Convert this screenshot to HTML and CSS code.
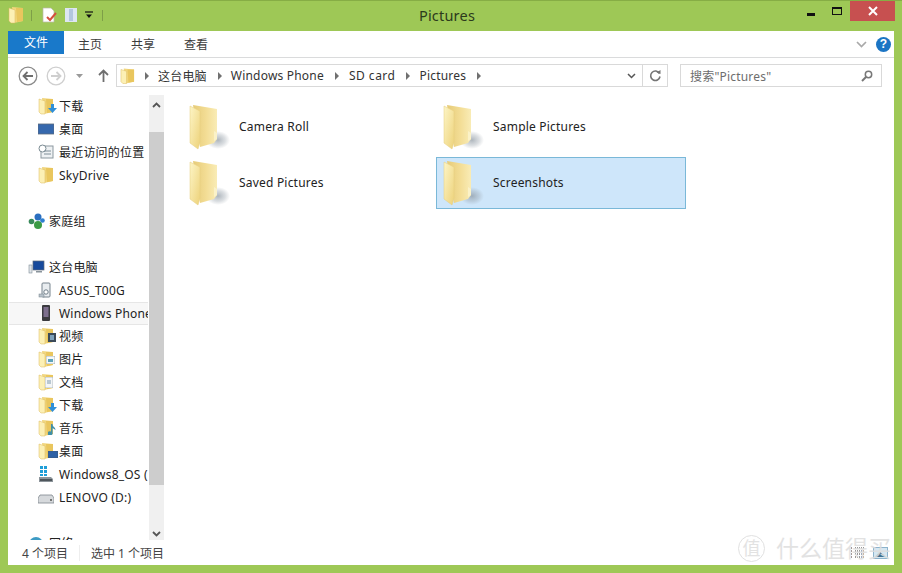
FILE: index.html
```html
<!DOCTYPE html>
<html lang="zh">
<head>
<meta charset="utf-8">
<title>Pictures</title>
<link rel="stylesheet" href="styles.css">
</head>
<body>
<svg class="defs" width="0" height="0">
  <defs>
    <linearGradient id="fb" x1="0" x2="1" y1="0" y2="0"><stop offset="0" stop-color="#e6cb78"/><stop offset=".55" stop-color="#f3dd95"/><stop offset="1" stop-color="#f9ecb6"/></linearGradient>
    <linearGradient id="ff" x1="0" x2="1" y1="0" y2="1"><stop offset="0" stop-color="#fdf5c6"/><stop offset="1" stop-color="#edd27a"/></linearGradient>
    <radialGradient id="sh"><stop offset="0" stop-color="#8b96a0" stop-opacity=".7"/><stop offset=".6" stop-color="#98a2ab" stop-opacity=".35"/><stop offset="1" stop-color="#a0a8b0" stop-opacity="0"/></radialGradient>
    <symbol id="folder-big" viewBox="0 0 44 48">
      <ellipse cx="30" cy="36" rx="12" ry="9" fill="url(#sh)"/>
      <path d="M5 1 L29 5 V35 L26 39 L12 43 Z" fill="url(#fb)"/>
      <path d="M26 27 L29 29 V35 L26 37 Z" fill="#fbf2c8"/>
      <path d="M2 2 L12 7 L12 38 L10 45 L2 39 Z" fill="url(#ff)" stroke="#e6cd7c" stroke-width=".5"/>
    </symbol>
    <symbol id="folder-small" viewBox="0 0 16 18">
      <path d="M4 1 L15 2 V15 L6 17 Z" fill="#f1d67e"/>
      <path d="M8 2 L15 2 V15 L9 16 Z" fill="#e9c65e"/>
      <path d="M1 2 L7 4 L7 17 L3 17 L1 15 Z" fill="#fcf0b5" stroke="#dcbb5c" stroke-width=".5"/>
    </symbol>
  </defs>
</svg>
<div class="window">
  <header class="titlebar">
    <div class="qat">
      <svg class="qat-folder" width="16" height="18"><use href="#folder-small"/></svg>
      <span class="qat-sep"></span>
      <svg width="16" height="16" viewBox="0 0 16 16"><path d="M2 1h8l3 3v11H2z" fill="#fff" stroke="#b9b9a8" stroke-width=".7"/><path d="M6 10l3 3 6-7" fill="none" stroke="#d4503e" stroke-width="2"/></svg>
      <svg class="qat-props" width="14" height="16" viewBox="0 0 14 16"><rect x="1" y="1" width="12" height="14" fill="#dde6f2"/><rect x="5" y="2" width="4" height="12" fill="#b3c6de"/></svg>
      <svg class="qat-drop" width="8" height="8" viewBox="0 0 8 8"><path d="M0 1h8" stroke="#111" stroke-width="1.2"/><path d="M1 3.500h6L4 7z" fill="#111"/></svg>
      <span class="qat-sep last"></span>
    </div>
    <div class="title">Pictures</div>
    <div class="controls">
      <button class="ctl"><span class="min-glyph"></span></button>
      <button class="ctl"><span class="max-glyph"></span></button>
      <button class="ctl close"><svg width="10" height="10" viewBox="0 0 10 10"><path d="M1 1l8 8M9 1l-8 8" stroke="#fff" stroke-width="2"/></svg></button>
    </div>
  </header>

  <div class="pane">
    <nav class="ribbon">
      <div class="tab file">文件</div>
      <div class="tab">主页</div>
      <div class="tab">共享</div>
      <div class="tab">查看</div>
      <div class="ribbon-end">
        <svg width="11" height="7" viewBox="0 0 11 7"><path d="M1 1l4.500 4.500L10 1" fill="none" stroke="#a9a9a9" stroke-width="1.700"/></svg>
        <span class="help">?</span>
      </div>
    </nav>

    <div class="addressrow">
      <svg class="nav-btn" width="20" height="20" viewBox="0 0 20 20"><circle cx="10" cy="10" r="8.800" fill="#fff" stroke="#8b8b8b" stroke-width="1.300"/><path d="M15 10H6M9.500 6L5.500 10l4 4" fill="none" stroke="#6e6e6e" stroke-width="1.800"/></svg>
      <svg class="nav-btn fwd" width="20" height="20" viewBox="0 0 20 20"><circle cx="10" cy="10" r="8.800" fill="#fff" stroke="#cfcfcf" stroke-width="1.300"/><path d="M5 10h9M10.500 6l4 4-4 4" fill="none" stroke="#cfcfcf" stroke-width="1.800"/></svg>
      <svg class="recent" width="7" height="4" viewBox="0 0 7 4"><path d="M0 0h7L3.500 4z" fill="#9a9a9a"/></svg>
      <svg class="up" width="11" height="13" viewBox="0 0 11 13"><path d="M5.500 13V2M1 6l4.500-4.500L10 6" fill="none" stroke="#6f6f6f" stroke-width="1.800"/></svg>
      <div class="address">
        <svg class="addr-folder" width="15" height="18"><use href="#folder-small"/></svg>
        <span class="crumb-arrow"></span><span class="crumb">这台电脑</span>
        <span class="crumb-arrow"></span><span class="crumb">Windows Phone</span>
        <span class="crumb-arrow"></span><span class="crumb wide">SD card</span>
        <span class="crumb-arrow"></span><span class="crumb">Pictures</span>
        <span class="crumb-arrow"></span>
        <span class="addr-spacer"></span>
        <svg class="addr-drop" width="9" height="6" viewBox="0 0 9 6"><path d="M1 1l3.500 3.500L8 1" fill="none" stroke="#555" stroke-width="1.500"/></svg>
        <span class="refresh">
          <svg width="13" height="13" viewBox="0 0 13 13"><path d="M10.500 4.500A4.700 4.700 0 1 0 11 7.500" fill="none" stroke="#757575" stroke-width="1.600"/><path d="M7.500 3.500L11.500 5V1z" fill="#757575"/></svg>
        </span>
      </div>
      <div class="search">
        <span>搜索"Pictures"</span>
        <svg width="12" height="12" viewBox="0 0 12 12"><circle cx="7.500" cy="4.500" r="3.200" fill="none" stroke="#777" stroke-width="1.500"/><path d="M5 7l-4 4" stroke="#777" stroke-width="2"/></svg>
      </div>
    </div>

    <div class="main">
      <aside class="sidebar">
        <div class="tree">
          <div class="row l2"><svg class="ni" width="16" height="18"><use href="#folder-small"/></svg><svg class="badge" width="9" height="9" viewBox="0 0 9 9"><path d="M3 0h3v4h3L4.500 9 0 4h3z" fill="#2f8fd8"/></svg><span>下载</span></div>
          <div class="row l2"><svg class="ni" width="16" height="18" viewBox="0 0 16 18"><rect y="4" width="16" height="10" fill="#3668ad" stroke="#5d6b7d" stroke-width=".8"/></svg><span>桌面</span></div>
          <div class="row l2"><svg class="ni" width="16" height="18" viewBox="0 0 16 18"><rect x="3" y="3" width="12" height="12" fill="#eef1f3" stroke="#8b979f"/><circle cx="4.500" cy="5.500" r="3.500" fill="#fff" stroke="#7b8b93"/><path d="M6 8h7M6 11h7" stroke="#7f8e98"/></svg><span>最近访问的位置</span></div>
          <div class="row l2 lat"><svg class="ni" width="16" height="18"><use href="#folder-small"/></svg><span>SkyDrive</span></div>
          <div class="gap"></div>
          <div class="row l1"><svg class="ni" width="17" height="18" viewBox="0 0 17 18"><circle cx="10" cy="5" r="3.500" fill="#2b6fc0"/><circle cx="3.500" cy="9.500" r="2.800" fill="#3a8a5b"/><circle cx="10" cy="13" r="4" fill="#3c9b45"/><circle cx="14.500" cy="8.500" r="2.300" fill="#2f7fd0"/></svg><span>家庭组</span></div>
          <div class="gap"></div>
          <div class="row l1"><svg class="ni" width="17" height="18" viewBox="0 0 17 18"><rect x="1" y="7" width="3" height="8" fill="#dfe4e8" stroke="#7f8c96" stroke-width=".6"/><rect x="5" y="3" width="11" height="9" fill="#174a9c" stroke="#5f6c78" stroke-width=".7"/><rect x="8" y="13" width="6" height="1.500" fill="#8a949b"/></svg><span>这台电脑</span></div>
          <div class="row l2 lat"><svg class="ni" width="16" height="18" viewBox="0 0 16 18"><rect x="4" y="2" width="8" height="14" rx="1" fill="#e9edf0" stroke="#76838d"/><circle cx="8" cy="11" r="2.200" fill="#fff" stroke="#6f7d88"/><rect x="1" y="13" width="5" height="3" fill="#b8c2ca" stroke="#76838d" stroke-width=".5"/></svg><span>ASUS_T00G</span></div>
          <div class="row l2 lat current"><svg class="ni" width="16" height="18" viewBox="0 0 16 18"><rect x="4" y="1" width="8" height="16" rx="1" fill="#3b3b3f"/><rect x="5.500" y="3" width="5" height="10" fill="#7d6f8d"/></svg><span>Windows Phone</span></div>
          <div class="row l2"><svg class="ni" width="16" height="18"><use href="#folder-small"/></svg><svg class="badge film" width="8" height="9" viewBox="0 0 8 9"><rect width="8" height="9" fill="#3b4a59"/><rect x="2" y="2" width="4" height="5" fill="#7ea1ba"/></svg><span>视频</span></div>
          <div class="row l2"><svg class="ni" width="16" height="18"><use href="#folder-small"/></svg><svg class="badge pic" width="9" height="8" viewBox="0 0 9 8"><rect width="9" height="8" fill="#f5f8f9" stroke="#8b9aa5" stroke-width=".7"/><rect x="2" y="3" width="5" height="3" fill="#5fa3ba"/></svg><span>图片</span></div>
          <div class="row l2"><svg class="ni" width="16" height="18"><use href="#folder-small"/></svg><svg class="badge doc" width="8" height="11" viewBox="0 0 8 11"><rect width="8" height="11" fill="#f4f6f7" stroke="#9ba6ae" stroke-width=".7"/><path d="M2 4h4M2 6h4" stroke="#7e99ad"/></svg><span>文档</span></div>
          <div class="row l2"><svg class="ni" width="16" height="18"><use href="#folder-small"/></svg><svg class="badge" width="9" height="9" viewBox="0 0 9 9"><path d="M3 0h3v4h3L4.500 9 0 4h3z" fill="#2f8fd8"/></svg><span>下载</span></div>
          <div class="row l2"><svg class="ni" width="16" height="18"><use href="#folder-small"/></svg><svg class="badge" width="8" height="11" viewBox="0 0 8 11"><path d="M3 0h1.500c0 3 3 3 3 6L4.500 4v5a2.500 2 0 1 1-1.500-1.600z" fill="#3f8fa8"/></svg><span>音乐</span></div>
          <div class="row l2"><svg class="ni" width="16" height="18"><use href="#folder-small"/></svg><svg class="badge" width="10" height="7" viewBox="0 0 10 7"><rect width="10" height="7" fill="#2e62a6" stroke="#4a5866" stroke-width=".6"/></svg><span>桌面</span></div>
          <div class="row l2 lat"><svg class="ni" width="16" height="18" viewBox="0 0 16 18"><path d="M2 1h3v3H2zM6 1h3v3H6zM2 5h3v3H2zM6 5h3v3H6zM2 9h3v2H2zM6 9h3v2H6z" fill="#1f9ed8"/><path d="M1 12h12l2 2v3H1z" fill="#8c949a"/><rect x="2" y="14" width="12" height="2" fill="#4e565c"/></svg><span>Windows8_OS (C:)</span></div>
          <div class="row l2 lat"><svg class="ni" width="16" height="18" viewBox="0 0 16 18"><path d="M2 7h12l2 3v5H0v-5z" fill="#d6d9dc" stroke="#7f878d" stroke-width=".8"/><circle cx="13" cy="12" r="1" fill="#555"/></svg><span>LENOVO (D:)</span></div>
          <div class="gap"></div>
          <div class="row l1"><svg class="ni" width="17" height="18" viewBox="0 0 17 18"><path d="M1 10a7 7 0 0 1 14 0z" fill="#3d9bc4"/><rect y="10" width="17" height="5" fill="#7f8c96"/></svg><span>网络</span></div>
        </div>
        <div class="scrollbar">
          <svg class="arrow-up" width="9" height="6" viewBox="0 0 9 6"><path d="M1 5l3.500-3.500L8 5" fill="none" stroke="#555" stroke-width="1.800"/></svg>
          <div class="thumb"></div>
          <svg class="arrow-down" width="9" height="6" viewBox="0 0 9 6"><path d="M1 1l3.500 3.500L8 1" fill="none" stroke="#555" stroke-width="1.800"/></svg>
        </div>
      </aside>
      <section class="files">
        <div class="file-item"><svg width="44" height="48"><use href="#folder-big"/></svg><span>Camera Roll</span></div>
        <div class="file-item"><svg width="44" height="48"><use href="#folder-big"/></svg><span>Sample Pictures</span></div>
        <div class="file-item"><svg width="44" height="48"><use href="#folder-big"/></svg><span>Saved Pictures</span></div>
        <div class="file-item selected"><svg width="44" height="48"><use href="#folder-big"/></svg><span>Screenshots</span></div>
      </section>
    </div>

    <footer class="status">
      <span class="count">4 个项目</span>
      <span class="status-sep"></span>
      <span>选中 1 个项目</span>
      <span class="views">
        <svg width="13" height="12" viewBox="0 0 13 12"><path d="M0 1h2M4 1h9M0 4h2M4 4h9M0 7h2M4 7h9M0 10h2M4 10h9" stroke="#333" stroke-dasharray="1 1"/></svg>
        <svg width="15" height="12" viewBox="0 0 15 12"><rect x=".5" y=".5" width="14" height="11" fill="#d5e7f2" stroke="#8cb3cc"/><path d="M2 10l5-5 6 5z" fill="#3f6f8f"/></svg>
      </span>
    </footer>
    <div class="watermark"><span class="wm-seal">值</span><span>什么值得买</span></div>
  </div>
</div>
</body>
</html>
```

FILE: styles.css
```css
* { box-sizing: border-box; }
html, body { margin: 0; height: 100%; }
body {
  background: #9ec856;
  font-family: "Noto Sans", "Noto Sans CJK SC", sans-serif;
  font-size: 12px;
  letter-spacing: .2px;
  color: #1e1e1e;
  overflow: hidden;
}
.defs { position: absolute; }
.window {
  width: 902px;
  height: 573px;
  display: flex;
  flex-direction: column;
  border-top: 1px solid #86ad45;
}
.titlebar {
  height: 30px;
  display: flex;
  align-items: flex-start;
  padding: 0 8px;
  position: relative;
  flex: none;
}
.qat { display: flex; align-items: center; gap: 7px; height: 27px; padding-top: 1px; }
.qat-sep { width: 1px; height: 11px; background: #7e9f48; }
.qat-sep:first-of-type { margin: 0 2px 0 0; }
.qat-sep.last { margin-left: 2px; }
.title {
  position: absolute;
  left: 0;
  right: 8px;
  top: 2px;
  text-align: center;
  font-size: 14.5px;
  line-height: 24px;
  color: #2c3a1c;
}
.controls { margin-left: auto; display: flex; margin-right: -8px; padding-right: 7px; }
.ctl {
  width: 45px;
  height: 20px;
  border: 0;
  padding: 0;
  background: transparent;
  display: flex;
  align-items: center;
  justify-content: center;
}
.ctl:nth-child(1), .ctl:nth-child(2) { width: 26px; }
.min-glyph { width: 8px; height: 3px; background: #111; margin-top: 7px; }
.max-glyph { width: 10px; height: 8px; border: 1px solid #111; border-top-width: 2px; }
.close { background: #c75050; }
.pane {
  flex: 1;
  margin: 0 8px 8px;
  background: #fff;
  display: flex;
  flex-direction: column;
  position: relative;
  min-height: 0;
}
.ribbon {
  height: 27px;
  display: flex;
  flex: none;
  border-bottom: 1px solid #dadbdc;
  align-items: flex-start;
}
.tab {
  height: 26px;
  width: 53px;
  padding-right: 1px;
  text-align: center;
  line-height: 27px;
  color: #3c3c3c;
  letter-spacing: 0;
}
.tab.file {
  width: 56px;
  height: 23px;
  padding-right: 0;
  background: #1979ca;
  color: #fff;
  line-height: 23px;
}
.ribbon-end { margin-left: auto; display: flex; align-items: center; gap: 9px; height: 27px; padding-right: 3px; }
.help {
  width: 15px;
  height: 15px;
  border-radius: 50%;
  background: #1c75c4;
  color: #fff;
  font: bold 12px/15px "Liberation Sans", sans-serif;
  text-align: center;
}
.addressrow {
  height: 37px;
  flex: none;
  display: flex;
  align-items: center;
  padding: 0 12px 2px 10px;
}
.nav-btn { margin-right: 8px; flex: none; }
.fwd { margin-right: 4px; }
.recent { margin: 0 15px 0 6px; flex: none; }
.up { margin-right: 7px; flex: none; }
.address {
  flex: none;
  width: 552px;
  height: 23px;
  border: 1px solid #d9d9d9;
  display: flex;
  align-items: center;
  padding-left: 3px;
}
.addr-folder { margin-right: 7px; flex: none; }
.crumb-arrow {
  width: 0;
  height: 0;
  border-left: 4px solid #707070;
  border-top: 4px solid transparent;
  border-bottom: 4px solid transparent;
  margin: 0 9px 0 3px;
  flex: none;
}
.crumb { margin-right: 8px; color: #333; white-space: nowrap; }
.crumb.wide { letter-spacing: .5px; margin-left: 1px; }
.addr-spacer { flex: 1; }
.addr-drop { margin-right: 6px; flex: none; }
.refresh {
  width: 25px;
  height: 21px;
  border-left: 1px solid #d9d9d9;
  display: flex;
  align-items: center;
  justify-content: center;
}
.search {
  margin-left: 12px;
  flex: 1;
  height: 23px;
  border: 1px solid #d9d9d9;
  display: flex;
  align-items: center;
  justify-content: space-between;
  padding: 0 8px 0 9px;
  color: #6d6d6d;
}
.main { flex: 1; display: flex; min-height: 0; }
.sidebar { width: 156px; flex: none; display: flex; min-height: 0; }
.tree { width: 140px; flex: none; overflow: hidden; }
.row {
  height: 23px;
  display: flex;
  align-items: center;
  position: relative;
  white-space: nowrap;
  overflow: hidden;
  color: #222;
  padding-bottom: 2px;
}
.row.lat { padding-bottom: 0; }
.row.lat .ni { margin-bottom: 2px; }
.row.l1 { padding-left: 20px; }
.row.l2 { padding-left: 30px; }
.ni { margin-right: 5px; flex: none; }
.row.l1 .ni { margin-right: 4px; }
.badge { position: absolute; left: 40px; bottom: 5px; }
.film { bottom: 6px; }
.pic { left: 38px; bottom: 7px; }
.doc { left: 37px; bottom: 6px; }
.gap { height: 23px; }
.current { background: #f7f7f7; border-top: 1px solid #e6e6e6; border-bottom: 1px solid #e6e6e6; margin-left: 1px; padding-left: 29px !important; }
.scrollbar {
  width: 15px;
  margin-left: 1px;
  background: #f0f0f0;
  display: flex;
  flex-direction: column;
  align-items: center;
  position: relative;
}
.arrow-up { margin: 7px 0 0; }
.thumb { width: 100%; height: 353px; background: #cdcdcd; margin-top: 24px; }
.arrow-down { position: absolute; bottom: 3px; }
.files {
  flex: 1;
  display: grid;
  grid-template-columns: repeat(2, 250px);
  grid-auto-rows: 52px;
  gap: 4px;
  align-content: start;
  padding: 6px 0 0 18px;
}
.file-item {
  display: flex;
  align-items: center;
  padding: 0 0 2px 5px;
  border: 1px solid transparent;
  color: #222;
}
.file-item svg { margin-right: 7px; margin-top: 3px; flex: none; }
.file-item.selected { background: #cee6fa; border-color: #7ab8d8; }
.status {
  height: 25px;
  flex: none;
  background: #fff;
  display: flex;
  align-items: center;
  padding: 0 6px 0 14px;
  color: #444;
  letter-spacing: 0;
}
.status-sep { width: 1px; height: 16px; background: #eee; margin: 0 11px 0 11px; }
.views { margin-left: auto; display: flex; align-items: center; gap: 9px; }
.watermark {
  position: absolute;
  right: 3px;
  bottom: 3px;
  display: flex;
  align-items: center;
  gap: 11px;
  color: #dedede;
  font-size: 23px;
  line-height: 28px;
  letter-spacing: 0;
  opacity: .85;
}
.wm-seal {
  width: 27px;
  height: 27px;
  border: 1px solid #dcdcdc;
  border-radius: 50%;
  font-size: 18px;
  line-height: 25px;
  text-align: center;
}
```
